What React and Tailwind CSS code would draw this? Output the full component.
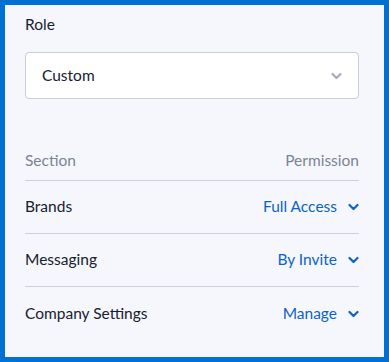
const rows = [
  { section: "Brands", permission: "Full Access" },
  { section: "Messaging", permission: "By Invite" },
  { section: "Company Settings", permission: "Manage" },
];

function Chevron({ className }) {
  return (
    <svg width="11" height="8" viewBox="0 0 11 8" fill="none" className={className}>
      <path d="M1.5 2L5.5 6L9.5 2" stroke="currentColor" strokeWidth="2.2" strokeLinecap="round" strokeLinejoin="round" />
    </svg>
  );
}

export default function App() {
  return (
    <div
      className="w-[389px] h-[362px] box-border border-[5px] border-[#0070d2] bg-[#f5f7fc] pl-5 pr-[25px] pt-[9px] text-[15.5px] text-[#16202f]"
      style={{ fontFamily: "Lato, 'Noto Sans', sans-serif" }}
    >
      <div className="leading-5">Role</div>
      <div className="mt-[18px] h-[47px] flex items-center justify-between rounded border border-[#c9ced8] bg-white pl-4 pr-4">
        <span>Custom</span>
        <Chevron className="text-[#a4abb9]" />
      </div>

      <div className="mt-[51px] flex justify-between leading-5 pb-[10px] border-b border-[#cdd1db] text-[#7b8394]">
        <span>Section</span>
        <span>Permission</span>
      </div>

      {rows.map((row, i) => (
        <div
          key={row.section}
          className={
            "h-[53px] flex items-center justify-between " +
            (i < rows.length - 1 ? "border-b border-[#cdd1db]" : "")
          }
        >
          <span>{row.section}</span>
          <span className="flex items-center gap-[11px] text-[#0b63c7]">
            {row.permission}
            <Chevron />
          </span>
        </div>
      ))}
    </div>
  );
}
